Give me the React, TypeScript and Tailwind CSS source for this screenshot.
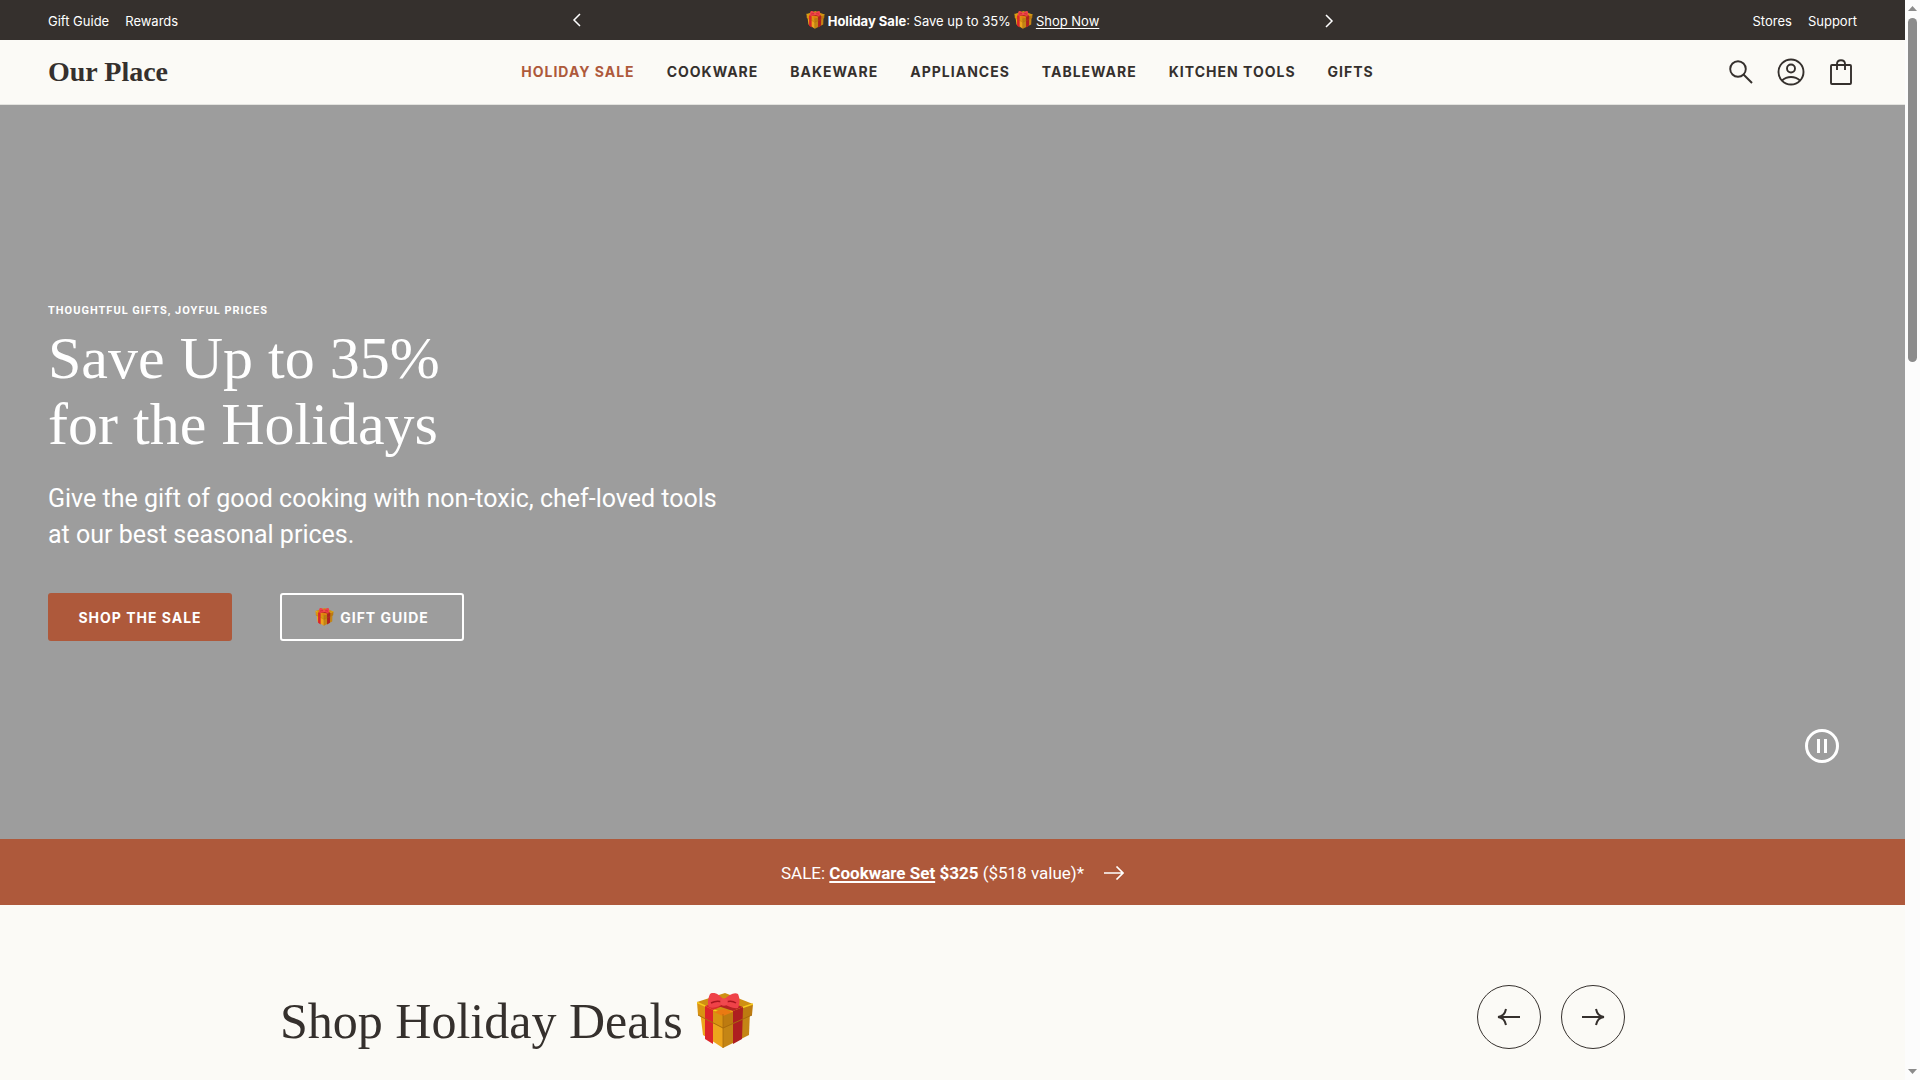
import React from "react";

const navItems = ["Holiday Sale", "Cookware", "Bakeware", "Appliances", "Tableware", "Kitchen Tools", "Gifts"];

function Gift({ className }: { className: string }) {
  return (
    <svg viewBox="0 0 56 56" className={className} aria-hidden="true">
      <path d="M3 18 26 30v25L6 42z" fill="#eda51c" />
      <path d="M53 18 26 30v25l26-13z" fill="#c48515" />
      <path d="M0 9 28 0l28 11-29 14z" fill="#cf8f12" />
      <path d="M0 9 26 21v14L1 22z" fill="#d99312" />
      <path d="M56 11 26 21v14l29-13z" fill="#bd7b10" />
      <path d="M0 9.500 26 21l30-10" fill="none" stroke="#f8cc1c" strokeWidth="1.500" />
      <path d="m8 13 8 4v34l-8-5z" fill="#dc2429" />
      <path d="m46 14-10 4v33l9-5z" fill="#ae1f20" />
      <path d="m8 13 22-8 8 3-22 9z" fill="#d92c2c" />
      <path d="m20 5 26 9-10 4-24-8z" fill="#b52222" />
      <path d="m17 19 9-3 10 3-10 4z" fill="#ea7a12" />
      <path d="m1 22 25 13 29-13" fill="none" stroke="#a96b0c" strokeWidth="1" />
      <path d="M26 21v34" stroke="#a96b0c" strokeWidth=".8" />
      <path d="M27 7C22 1 16-2 13 1c-2 4-3 10-1 13 5 2 10-1 15-3zM27 7c5-6 11-8 14-6 2 5 2 9 0 14-5 1-10-2-14-4z" fill="#ef4248" />
      <path d="M14 10c4-2 8-2 11-1M39 10c-3-2-7-2-10-1" fill="none" stroke="#a9161e" strokeWidth="1.500" />
      <circle cx="27" cy="9" r="3.800" fill="#f0494e" />
    </svg>
  );
}

function Chevron({ d }: { d: string }) {
  return (
    <svg viewBox="0 0 12 14" className="h-3.5 w-3" fill="none" stroke="currentColor" strokeWidth="1.5" aria-hidden="true">
      <path d={d} />
    </svg>
  );
}

function AnnouncementBar() {
  return (
    <div className="grid h-10 grid-cols-[1fr_2fr_1fr] items-center bg-[#35302d] px-12 text-[13px] text-white">
      <nav aria-label="Rewards and gifts" className="flex gap-4 pt-1">
        <a href="#gift-guide">Gift Guide</a>
        <a href="#rewards">Rewards</a>
      </nav>
      <div className="mx-auto flex w-full max-w-[764px] items-center justify-between">
        <button type="button" aria-label="Previous announcement">
          <Chevron d="M9 1 3 7l6 6" />
        </button>
        <p className="flex items-center gap-[3px] pt-1">
          <Gift className="mb-1 h-[18px] w-[19px]" />
          <span><b>Holiday Sale</b>: Save up to 35%</span>
          <Gift className="mb-1 h-[18px] w-[19px]" />
          <a href="#shop" className="underline underline-offset-2">Shop Now</a>
        </p>
        <button type="button" aria-label="Next announcement" className="pt-0.5">
          <Chevron d="m4 1 6 6-6 6" />
        </button>
      </div>
      <nav aria-label="Help" className="flex justify-end gap-4 pt-1">
        <a href="#stores">Stores</a>
        <a href="#support">Support</a>
      </nav>
    </div>
  );
}

function Header() {
  return (
    <header className="flex h-[65px] items-center justify-between border-b border-[#e3e3df] bg-[#fbfaf6] px-12">
      <a href="#home" className="font-['Liberation_Serif',serif] text-[28px] leading-8 font-bold">Our Place</a>
      <nav aria-label="Main" className="flex gap-8 pb-0.5 text-[14px] font-bold tracking-[1px] uppercase">
        {navItems.map((item, i) => (
          <a key={item} href="#shop" className={i === 0 ? "text-[#ae593b]" : ""}>{item}</a>
        ))}
      </nav>
      <div className="flex gap-5">
        <button type="button" aria-label="Search">
          <svg viewBox="0 0 30 30" className="size-[30px]" fill="none" stroke="currentColor" strokeWidth="1.900">
            <circle cx="11" cy="12" r="7.800" />
            <path d="m16.500 17.500 8.500 8.500" />
          </svg>
        </button>
        <button type="button" aria-label="Account">
          <svg viewBox="0 0 30 30" className="size-[30px]" fill="none" stroke="currentColor" strokeWidth="1.900">
            <circle cx="14" cy="15" r="12.500" />
            <circle cx="14" cy="11.500" r="4" />
            <path d="M5 23.500c5-4.700 13-4.700 18 0" />
          </svg>
        </button>
        <button type="button" aria-label="Cart">
          <svg viewBox="0 0 30 30" className="size-[30px]" fill="none" stroke="currentColor" strokeWidth="1.900">
            <rect x="4" y="8" width="20" height="19" rx="1" />
            <path d="M10 13V7c0-5 8-5 8 0v6" />
          </svg>
        </button>
      </div>
    </header>
  );
}

function Hero() {
  return (
    <section className="relative flex h-[68vh] flex-col justify-center bg-[#9d9d9d] px-12 text-white">
      <p className="font-['Roboto',sans-serif] text-[11px] leading-4 font-bold tracking-[1px] uppercase">Thoughtful gifts, joyful prices</p>
      <h1 className="mt-1.5 font-['Liberation_Serif',serif] text-[60px] leading-[66px]">
        Save Up to 35%<br />for the Holidays
      </h1>
      <p className="mt-6 font-['Roboto',sans-serif] text-[25px] leading-9">
        Give the gift of good cooking with non-toxic, chef-loved tools<br />at our best seasonal prices.
      </p>
      <div className="mt-10 flex gap-12 text-[14px] font-bold tracking-[1px]">
        <a href="#shop" className="flex h-12 w-46 items-center justify-center rounded-[3px] bg-[#ae593b]">SHOP THE SALE</a>
        <a href="#gift-guide" className="flex h-12 w-46 items-center justify-center gap-1.5 rounded-[3px] border-2 border-white">
          <Gift className="h-[18px] w-[19px]" />GIFT GUIDE
        </a>
      </div>
      <button type="button" aria-label="Pause video" className="absolute right-[66px] bottom-[76px]">
        <svg viewBox="0 0 34 34" className="size-[34px]" fill="none" stroke="currentColor" strokeWidth="3">
          <circle cx="17" cy="17" r="15.500" />
          <path d="M13.500 10v14M20.500 10v14" />
        </svg>
      </button>
    </section>
  );
}

function CircleButton({ label, d }: { label: string; d: string }) {
  return (
    <button type="button" aria-label={label} className="flex size-16 items-center justify-center rounded-full border border-[#35302d]">
      <svg viewBox="0 0 24 18" className="h-[18px] w-6" fill="none" stroke="currentColor" strokeWidth="2" aria-hidden="true">
        <path d={d} />
      </svg>
    </button>
  );
}

function Scrollbar() {
  return (
    <div className="flex h-screen w-[15px] flex-none flex-col items-center bg-[#fcfcfc] py-1.5" aria-hidden="true">
      <svg viewBox="0 0 9 5" className="h-[5px] w-[9px]"><path d="M0 5 4.500 0 9 5z" fill="#8b8b8b" /></svg>
      <div className="mt-[7px] h-[344px] w-[9px] rounded-full bg-[#8b8b8b]" />
      <svg viewBox="0 0 9 5" className="mt-auto h-[5px] w-[9px]"><path d="M0 0h9L4.500 5z" fill="#8b8b8b" /></svg>
    </div>
  );
}

export default function App() {
  return (
    <div className="flex h-screen overflow-hidden bg-[#fbfaf6] font-['Inter',sans-serif] text-[#35302d]">
      <div className="min-w-0 flex-1">
        <AnnouncementBar />
        <Header />
        <main>
          <Hero />
          <a href="#shop" className="flex h-[66px] items-center justify-center gap-5 bg-[#ae593b] pt-0.5 font-['Roboto',sans-serif] text-[17px] text-white">
            <span>SALE: <b className="underline decoration-2 underline-offset-2">Cookware Set</b> <b>$325</b> ($518 value)*</span>
            <svg viewBox="0 0 20 14" className="h-3.5 w-5" fill="none" stroke="currentColor" strokeWidth="1.6" aria-hidden="true">
              <path d="M0 7h19M12.500.500 19 7l-6.500 6.500" />
            </svg>
          </a>
          <section className="flex items-start justify-between px-[280px] pt-20">
            <h2 className="flex items-center gap-3.5 font-['Liberation_Serif',serif] text-[50px] leading-[72px]">
              Shop Holiday Deals
              <Gift className="size-14" />
            </h2>
            <div className="flex gap-5">
              <CircleButton label="Previous deals" d="M23 9H2M9 1C8 6 6 8.500 1 9c5 .5 7 3 8 8" />
              <CircleButton label="Next deals" d="M1 9h21M15 1c1 5 3 7.500 8 8-5 .5-7 3-8 8" />
            </div>
          </section>
        </main>
      </div>
      <Scrollbar />
    </div>
  );
}
